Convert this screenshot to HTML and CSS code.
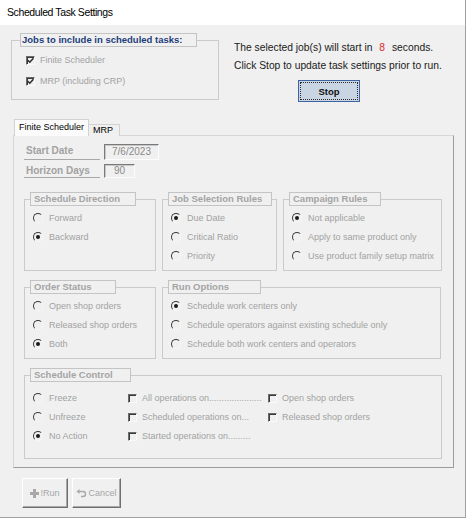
FILE: index.html
```html
<!DOCTYPE html>
<html lang="en">
  <head>
    <meta charset="UTF-8" />
    <title>Scheduled Task Settings</title>
    <link rel="stylesheet" href="styles.css">
  </head>
  <body>
    <div class="window">
      <div class="titlebar">Scheduled Task Settings</div>

      <!-- jobs + countdown -->
      <div class="top">
        <fieldset class="group jobs">
          <legend>Jobs to include in scheduled tasks:</legend>
          <div class="opts">
            <label class="opt"><span class="chk on"><svg width="7" height="7" viewBox="0 0 7 7"><path d="M0.8 3.2L2.8 5.2L6.4 1.2" fill="none" stroke="#303030" stroke-width="1.6"/></svg></span>Finite Scheduler</label>
            <label class="opt"><span class="chk on"><svg width="7" height="7" viewBox="0 0 7 7"><path d="M0.8 3.2L2.8 5.2L6.4 1.2" fill="none" stroke="#303030" stroke-width="1.6"/></svg></span>MRP (including CRP)</label>
          </div>
        </fieldset>
        <div class="notice">
          <p>The selected job(s) will start in <span class="count">8</span> seconds.</p>
          <p>Click Stop to update task settings prior to run.</p>
          <button class="stop">Stop</button>
        </div>
      </div>

      <!-- tabs -->
      <div class="tabs">
        <div class="tab active">Finite Scheduler</div>
        <div class="tab">MRP</div>
      </div>
      <div class="panel">
        <div class="field">
          <span class="flabel">Start Date</span>
          <span class="fbox">7/6/2023</span>
        </div>
        <div class="field second">
          <span class="flabel">Horizon Days</span>
          <span class="fbox short">90</span>
        </div>

        <div class="row first">
          <fieldset class="group dir">
            <legend>Schedule Direction</legend>
            <div class="opts">
              <label class="opt"><span class="radio"></span>Forward</label>
              <label class="opt"><span class="radio on"></span>Backward</label>
            </div>
          </fieldset>
          <fieldset class="group sel">
            <legend>Job Selection Rules</legend>
            <div class="opts">
              <label class="opt"><span class="radio on"></span>Due Date</label>
              <label class="opt"><span class="radio"></span>Critical Ratio</label>
              <label class="opt"><span class="radio"></span>Priority</label>
            </div>
          </fieldset>
          <fieldset class="group camp">
            <legend>Campaign Rules</legend>
            <div class="opts">
              <label class="opt"><span class="radio on"></span>Not applicable</label>
              <label class="opt"><span class="radio"></span>Apply to same product only</label>
              <label class="opt"><span class="radio"></span>Use product family setup matrix</label>
            </div>
          </fieldset>
        </div>

        <div class="row">
          <fieldset class="group status">
            <legend>Order Status</legend>
            <div class="opts">
              <label class="opt"><span class="radio"></span>Open shop orders</label>
              <label class="opt"><span class="radio"></span>Released shop orders</label>
              <label class="opt"><span class="radio on"></span>Both</label>
            </div>
          </fieldset>
          <fieldset class="group run">
            <legend>Run Options</legend>
            <div class="opts">
              <label class="opt"><span class="radio on"></span>Schedule work centers only</label>
              <label class="opt"><span class="radio"></span>Schedule operators against existing schedule only</label>
              <label class="opt"><span class="radio"></span>Schedule both work centers and operators</label>
            </div>
          </fieldset>
        </div>

        <fieldset class="group control">
          <legend>Schedule Control</legend>
          <div class="cols">
            <div class="opts c1">
              <label class="opt"><span class="radio"></span>Freeze</label>
              <label class="opt"><span class="radio"></span>Unfreeze</label>
              <label class="opt"><span class="radio on"></span>No Action</label>
            </div>
            <div class="opts c2">
              <label class="opt"><span class="chk"></span>All operations on.....................</label>
              <label class="opt"><span class="chk"></span>Scheduled operations on...</label>
              <label class="opt"><span class="chk"></span>Started operations on.........</label>
            </div>
            <div class="opts c3">
              <label class="opt"><span class="chk"></span>Open shop orders</label>
              <label class="opt"><span class="chk"></span>Released shop orders</label>
            </div>
          </div>
        </fieldset>
      </div>

      <div class="actions">
        <button class="btn">
          <svg width="9" height="9" viewBox="0 0 9 9"><path d="M3 0h3v3h3v3H6v3H3V6H0V3h3z" fill="#a8a8a8"/></svg>!Run
        </button>
        <button class="btn">
          <svg width="11" height="9" viewBox="0 0 11 9"><path d="M3 2.5h4a2.5 2.5 0 0 1 0 5H5" fill="none" stroke="#a8a8a8" stroke-width="1.4"/><path d="M0.5 2.5L3.5 0v5z" fill="#a8a8a8"/></svg>Cancel
        </button>
      </div>
    </div>
  </body>
</html>
```

FILE: styles.css
```css
* {
  box-sizing: border-box;
}
body {
  margin: 0;
  background: #fff;
  font-family: "Liberation Sans", Arial, sans-serif;
  font-size: 9px;
  color: #000;
}
.window {
  width: 466px;
  height: 518px;
  background: #f0f0f0;
  border-right: 1px solid #a0a0a0;
  border-bottom: 1px solid #a0a0a0;
}
.titlebar {
  height: 25px;
  background: #fff;
  padding-left: 7px;
  font-size: 10.5px;
  letter-spacing: -0.4px;
  line-height: 25px;
}

/* group boxes */
fieldset.group {
  margin: 0;
  min-width: 0;
  padding: 0 0 0 5px;
  border: 1px solid #cacaca;
}
fieldset.group legend {
  border: 1px solid #c4c4c4;
  padding: 0 3px;
  font-size: 9.5px;
  font-weight: bold;
  line-height: 12px;
  color: #a4a4a4;
}
fieldset.dir legend {
  width: 106px;
}
fieldset.sel legend {
  width: 104px;
}
fieldset.camp legend {
  width: 92px;
}
fieldset.status legend {
  width: 86px;
}
fieldset.run legend {
  width: 93px;
}
fieldset.control legend {
  width: 101px;
}
.opts {
  display: flex;
  flex-direction: column;
  gap: 1px;
  margin: 3px 0 0 3px;
}
.opt {
  display: flex;
  align-items: center;
  gap: 6px;
  height: 18px;
  color: #a2a2a2;
  white-space: nowrap;
}
.radio {
  width: 10px;
  height: 10px;
  border-radius: 50%;
  border: 1px solid;
  border-color: #3a3a3a #f6f6f6 #f6f6f6 #3a3a3a;
  display: flex;
  align-items: center;
  justify-content: center;
  flex: none;
}
.radio.on::after {
  content: "";
  width: 4px;
  height: 4px;
  border-radius: 50%;
  background: #1a1a1a;
}
.chk {
  width: 9px;
  height: 9px;
  border: 1px solid;
  border-color: #6a6a6a #fafafa #fafafa #6a6a6a;
  box-shadow: inset 1px 1px 0 #3a3a3a;
  flex: none;
  display: flex;
  align-items: center;
  justify-content: center;
}

/* top area */
.top {
  display: flex;
  align-items: flex-start;
  padding: 8px 0 0 11px;
}
.jobs {
  width: 208px;
  height: 67px;
}
fieldset.jobs {
  padding-left: 8px;
}
fieldset.jobs legend {
  width: 177px;
  color: #1d3d7c;
  padding: 0 1px;
}
.jobs .opts {
  margin: 3px 0 0 6px;
}
.jobs .opt {
  height: 20px;
  gap: 5px;
}
.notice {
  margin-left: 15px;
  padding-top: 6px;
  font-size: 10.3px;
  color: #1a1a1a;
}
.notice p {
  margin: 0;
  line-height: 18px;
}
.count {
  color: #e02828;
  margin: 0 4px;
}
.stop {
  display: block;
  margin: 5px 0 0 64px;
  width: 62px;
  height: 22px;
  background: #c9d5e2;
  border: 1px solid #3f64a3;
  outline: 1px dotted #2c2c2c;
  outline-offset: -3px;
  font-family: "Liberation Sans", Arial, sans-serif;
  font-size: 9.5px;
  font-weight: bold;
  color: #111;
  padding: 0;
}

/* tabs */
.tabs {
  display: flex;
  align-items: flex-end;
  height: 16px;
  margin: 18px 0 0 14px;
  position: relative;
  z-index: 1;
}
.tab {
  border: 1px solid #d2d2d2;
  border-bottom: none;
  padding-left: 4px;
  font-size: 9px;
  height: 12px;
  line-height: 11px;
  width: 32px;
  margin-left: -1px;
  background: #f0f0f0;
}
.tab.active {
  width: 75px;
  height: 17px;
  line-height: 14px;
  margin-left: 0;
  background: #fbfbfb;
}
.panel {
  margin: -1px 0 0 13px;
  width: 441px;
  height: 333px;
  border: 1px solid;
  border-color: #d6d6d6 #9c9c9c #9c9c9c #d6d6d6;
  padding: 8px 0 0 10px;
}
.field {
  display: flex;
  align-items: center;
  gap: 4px;
  height: 16px;
}
.field.second {
  height: 14px;
  margin-top: 4px;
}
.flabel {
  width: 76px;
  height: 100%;
  padding-left: 2px;
  font-size: 10px;
  font-weight: bold;
  color: #a2a2a2;
  border-bottom: 1px solid #a8a8a8;
  line-height: 13px;
}
.fbox {
  width: 55px;
  height: 100%;
  border: 1px solid;
  border-color: #7a7a7a #fcfcfc #fcfcfc #7a7a7a;
  box-shadow: inset 1px 1px 0 #c8c8c8;
  font-size: 10px;
  color: #8a8a8a;
  text-align: center;
  line-height: 13px;
}
.fbox.short {
  width: 31px;
  line-height: 11px;
}
.row {
  display: flex;
  gap: 6px;
  margin-top: 9px;
}
.row.first {
  margin-top: 14px;
}
.row .group {
  height: 79px;
}
.dir,
.status {
  width: 132px;
}
.sel {
  width: 115px;
}
.camp {
  width: 159px;
}
.run {
  width: 279px;
}
fieldset.control {
  width: 418px;
  height: 91px;
  margin-top: 9px;
}
.cols {
  display: flex;
  margin-top: 7px;
}
.cols .opts {
  margin-top: 0;
}
.c1 {
  width: 92px;
}
.c2 {
  width: 137px;
}
.c2 .opt,
.c3 .opt {
  gap: 5px;
}

/* bottom buttons */
.actions {
  display: flex;
  gap: 4px;
  margin: 10px 0 0 22px;
}
.btn {
  height: 30px;
  width: 46px;
  padding: 0;
  display: flex;
  align-items: center;
  justify-content: center;
  gap: 1px;
  background: #f0f0f0;
  border: 1px solid;
  border-color: #fff #6e6e6e #6e6e6e #fff;
  box-shadow: inset -1px -1px 0 #a8a8a8;
  font-family: "Liberation Sans", Arial, sans-serif;
  font-size: 9px;
  color: #a6a6a6;
}
.btn + .btn {
  width: 49px;
}
```
